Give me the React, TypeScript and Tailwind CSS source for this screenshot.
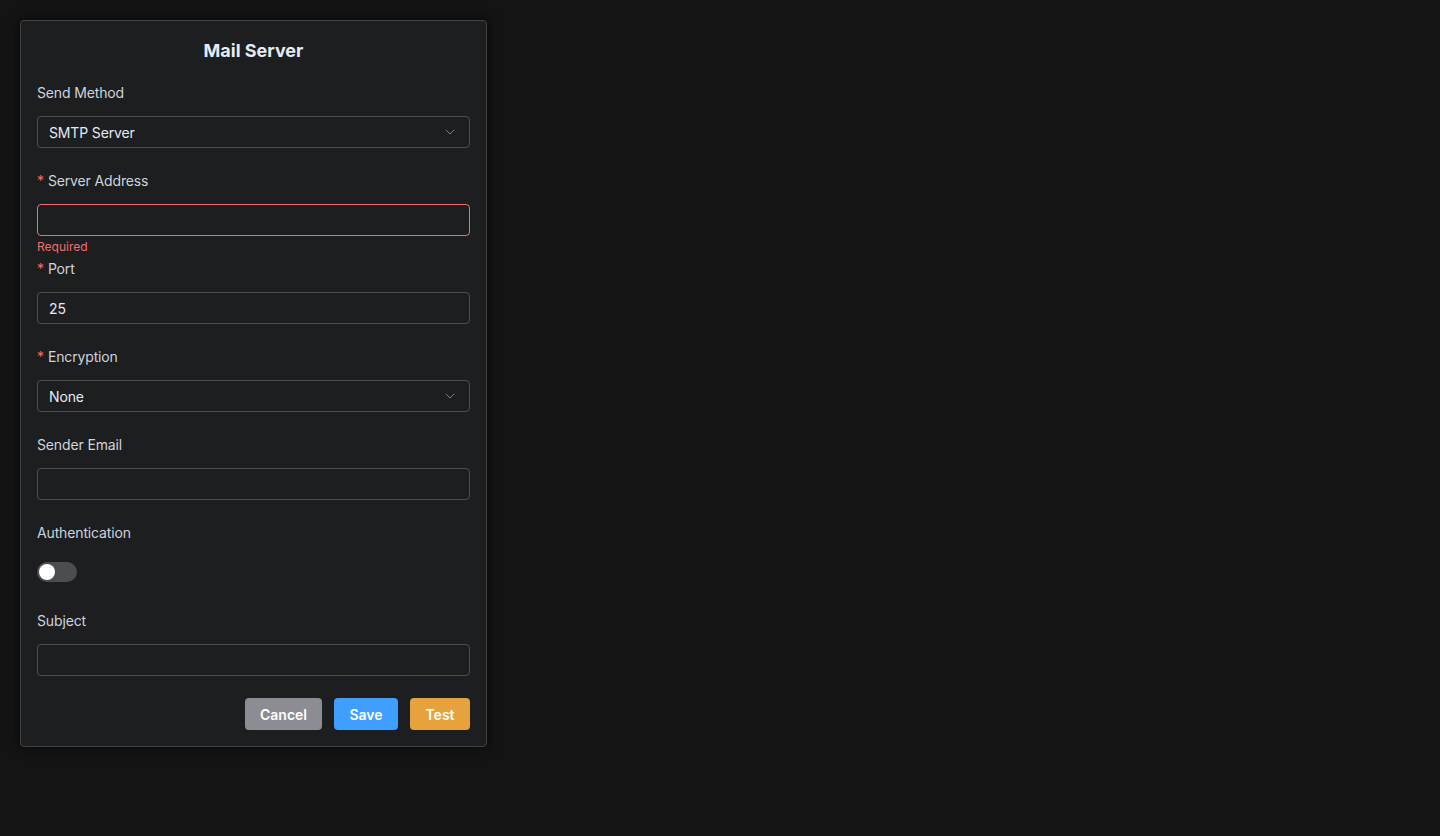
import { ChevronDown } from 'lucide-react';
import { useState } from 'react';

type FieldProps = {
  label: string;
  required?: boolean;
  children: React.ReactNode;
};

function Field({ label, required, children }: FieldProps) {
  return (
    <div className="flex flex-col">
      <label className="mb-[12px] flex h-[22px] items-center text-[14px] leading-[22px] tracking-[-0.01em] text-[#cfd3dc]">
        {required && <span className="mr-[4px] text-[#f56c6c]">*</span>}
        {label}
      </label>
      {children}
    </div>
  );
}

function TextInput({ value, error }: { value?: string; error?: boolean }) {
  return (
    <input
      type="text"
      defaultValue={value}
      className={`h-[32px] w-full rounded-[4px] border bg-transparent px-[11px] text-[14px] tracking-[-0.01em] text-[#e5eaf3] outline-none ${
        error ? 'border-[#f56c6c]' : 'border-[#4c4d4f]'
      }`}
    />
  );
}

function SelectBox({ value }: { value: string }) {
  return (
    <div className="flex h-[32px] w-full items-center justify-between rounded-[4px] border border-[#4c4d4f] px-[11px] text-[14px] tracking-[-0.01em] text-[#e5eaf3]">
      <span>{value}</span>
      <ChevronDown size={16} strokeWidth={1.25} className="text-[#8d9095]" />
    </div>
  );
}

export default function App() {
  const [auth, setAuth] = useState(false);

  return (
    <div className="min-h-[836px] bg-[#141414] p-[20px] font-['Inter',sans-serif]">
      <div className="flex w-[467px] flex-col rounded-[4px] border border-[#414243] bg-[#1d1e1f] px-[16px] pt-[16px] pb-[16px] shadow-[0_0_12px_rgba(0,0,0,0.72)]">
        <h2 className="h-[28px] text-center text-[18px] leading-[28px] font-bold text-[#e5eaf3]">Mail Server</h2>

        <div className="mt-[17px] flex flex-col gap-[22px]">
          <Field label="Send Method">
            <SelectBox value="SMTP Server" />
          </Field>

          <div className="flex flex-col">
            <Field label="Server Address" required>
              <TextInput error />
            </Field>
            <div className="h-[22px] text-[12px] leading-[22px] text-[#f56c6c]">Required</div>
            <Field label="Port" required>
              <TextInput value="25" />
            </Field>
          </div>

          <Field label="Encryption" required>
            <SelectBox value="None" />
          </Field>

          <Field label="Sender Email">
            <TextInput />
          </Field>

          <Field label="Authentication">
            <div className="flex h-[32px] items-center">
              <button
                type="button"
                onClick={() => setAuth(!auth)}
                className={`flex h-[20px] w-[40px] items-center rounded-full px-[2px] ${
                  auth ? 'justify-end bg-[#409eff]' : 'justify-start bg-[#4c4d4f]'
                }`}
              >
                <span className="h-[16px] w-[16px] rounded-full bg-white" />
              </button>
            </div>
          </Field>

          <Field label="Subject">
            <TextInput />
          </Field>

          <div className="flex justify-end gap-[12px]">
            <button type="button" className="h-[32px] w-[77px] rounded-[4px] bg-[#8c8d92] text-[14px] font-semibold text-white">
              Cancel
            </button>
            <button type="button" className="h-[32px] w-[64px] rounded-[4px] bg-[#409eff] text-[14px] font-semibold text-white">
              Save
            </button>
            <button type="button" className="h-[32px] w-[60px] rounded-[4px] bg-[#e6a23c] text-[14px] font-semibold text-white">
              Test
            </button>
          </div>
        </div>
      </div>
    </div>
  );
}
